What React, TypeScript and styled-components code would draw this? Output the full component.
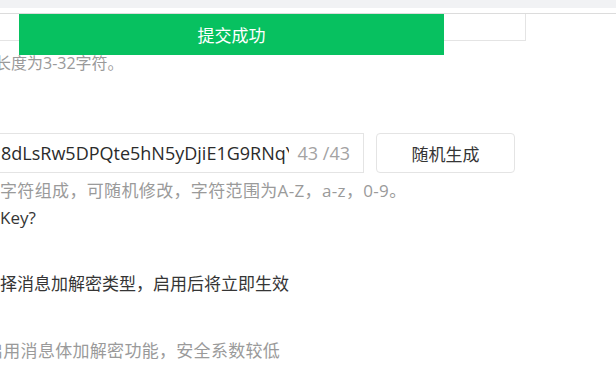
import React from "react";
import styled, { createGlobalStyle } from "styled-components";

/** ===========================================================================
 * Global
 * ============================================================================
 */
const GlobalStyle = createGlobalStyle`
  html, body {
    margin: 0;
    padding: 0;
    background: #ffffff;
    overflow: hidden;
  }
  body {
    font-family: "Open Sans", "Noto Sans CJK SC", sans-serif;
    color: #353535;
  }
`;

const COLORS = {
  GREEN: "#07c160",
  TEXT: "#353535",
  HINT: "#9a9a9a",
  BORDER: "#e4e4e4",
};

/** ===========================================================================
 * Layout
 * ============================================================================
 */
const Page = styled.div`
  position: relative;
  width: 616px;
  height: 368px;
  overflow: hidden;
`;

const TopBar = styled.div`
  height: 8px;
  background: #f1f2f4;
`;

const Panel = styled.div`
  margin-top: 5px;
  border-top: 1px solid #dcdcdc;
`;

const NameBox = styled.div`
  margin-left: -20px;
  width: 545px;
  height: 26px;
  border-right: 1px solid ${COLORS.BORDER};
  border-bottom: 1px solid ${COLORS.BORDER};
`;

const Toast = styled.div`
  position: absolute;
  left: 19px;
  top: 14px;
  width: 425px;
  height: 41px;
  display: flex;
  align-items: center;
  justify-content: center;
  background: ${COLORS.GREEN};
  color: #ffffff;
  font-size: 17px;
`;

const Hint = styled.div<{
  $top: number;
  $shift?: number;
  $size?: number;
  $spacing?: number;
}>`
  margin-top: ${(p) => p.$top}px;
  margin-left: ${(p) => -(p.$shift || 0)}px;
  font-size: ${(p) => p.$size || 16}px;
  letter-spacing: ${(p) => p.$spacing || 0}px;
  line-height: 22px;
  color: ${COLORS.HINT};
  white-space: nowrap;
`;

const Label = styled.div<{ $top: number }>`
  margin-top: ${(p) => p.$top}px;
  font-size: 17px;
  line-height: 24px;
  color: ${COLORS.TEXT};
  white-space: nowrap;
`;

const KeyRow = styled.div`
  margin-top: 59px;
  display: flex;
  align-items: center;
  gap: 12px;
`;

const KeyInput = styled.div`
  box-sizing: border-box;
  margin-left: -20px;
  width: 384px;
  height: 40px;
  padding: 0 13px 0 20px;
  display: flex;
  align-items: center;
  border: 1px solid ${COLORS.BORDER};
  font-size: 18px;
`;

const KeyValue = styled.div`
  width: 288px;
  overflow: hidden;
  white-space: nowrap;
  color: #2b2b2b;
`;

const Counter = styled.div`
  margin-left: auto;
  color: #a3a3a3;
  white-space: nowrap;
`;

const Button = styled.button`
  box-sizing: border-box;
  width: 139px;
  height: 40px;
  border: 1px solid ${COLORS.BORDER};
  border-radius: 4px;
  background: #ffffff;
  font-family: inherit;
  font-size: 17px;
  color: ${COLORS.TEXT};
  cursor: pointer;
`;

/** ===========================================================================
 * App
 * ============================================================================
 */
export default function App() {
  return (
    <Page>
      <GlobalStyle />
      <TopBar />
      <Panel>
        <NameBox />
        <Hint $top={11} $shift={5}>
          长度为3-32字符。
        </Hint>
        <KeyRow>
          <KeyInput>
            <KeyValue>8dLsRw5DPQte5hN5yDjiE1G9RNqYw7k</KeyValue>
            <Counter>43 /43</Counter>
          </KeyInput>
          <Button>随机生成</Button>
        </KeyRow>
        <Hint $top={7} $size={17} $spacing={0.35}>
          字符组成，可随机修改，字符范围为A-Z，a-z，0-9。
        </Hint>
        <Label $top={4}>Key?</Label>
        <Label $top={42}>择消息加解密类型，启用后将立即生效</Label>
        <Hint $top={44} $shift={14} $size={17} $spacing={0.3}>
          启用消息体加解密功能，安全系数较低
        </Hint>
      </Panel>
      <Toast>提交成功</Toast>
    </Page>
  );
}
